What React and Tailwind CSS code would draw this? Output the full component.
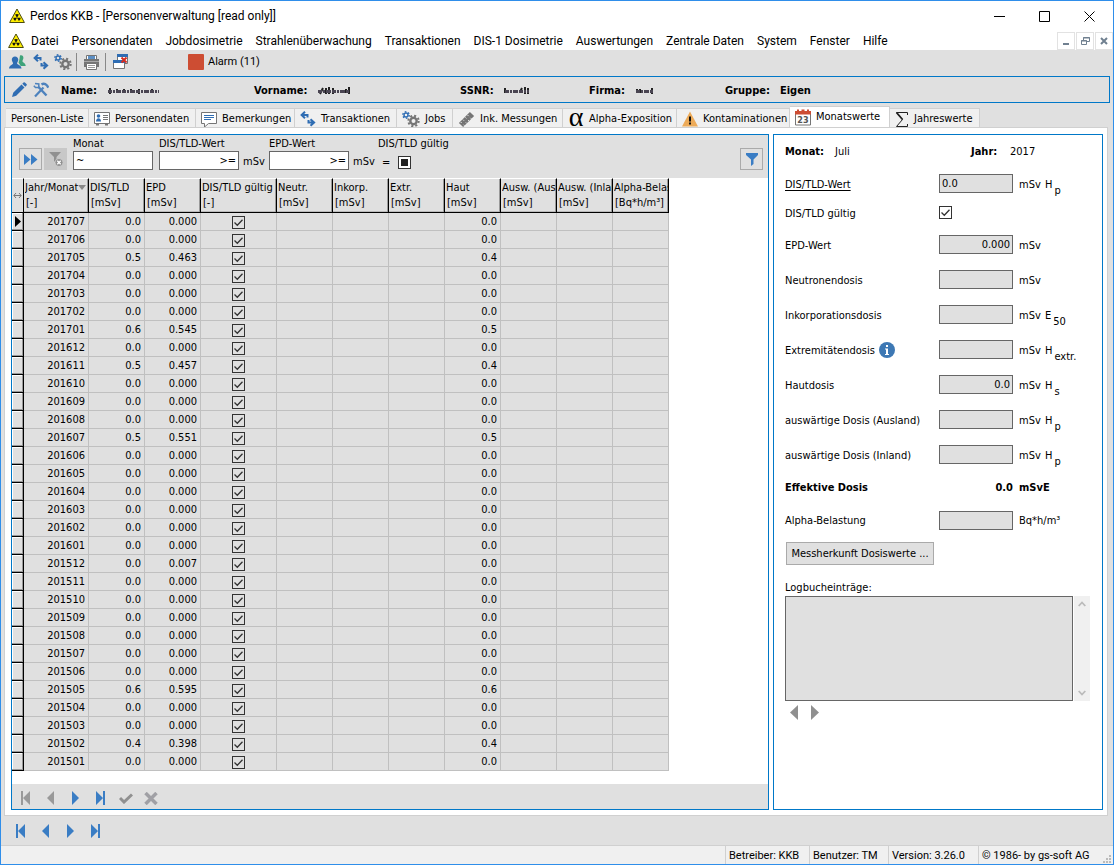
import React from 'react';

const MENU = ['Datei', 'Personendaten', 'Jobdosimetrie', 'Strahlenüberwachung', 'Transaktionen', 'DIS-1 Dosimetrie', 'Auswertungen', 'Zentrale Daten', 'System', 'Fenster', 'Hilfe'];

const COLUMNS = [
    { title: 'Jahr/Monat', unit: '[-]', width: 'w-[65px]', sorted: true },
    { title: 'DIS/TLD', unit: '[mSv]', width: 'w-[56px]' },
    { title: 'EPD', unit: '[mSv]', width: 'w-[56px]' },
    { title: 'DIS/TLD gültig', unit: '[-]', width: 'w-[76px]' },
    { title: 'Neutr.', unit: '[mSv]', width: 'w-[56px]' },
    { title: 'Inkorp.', unit: '[mSv]', width: 'w-[56px]' },
    { title: 'Extr.', unit: '[mSv]', width: 'w-[56px]' },
    { title: 'Haut', unit: '[mSv]', width: 'w-[56px]' },
    { title: 'Ausw. (Ausl', unit: '[mSv]', width: 'w-[56px]' },
    { title: 'Ausw. (Inlan', unit: '[mSv]', width: 'w-[56px]' },
    { title: 'Alpha-Belas', unit: '[Bq*h/m³]', width: 'w-[56px]' },
];

// month, DIS/TLD, EPD, skin dose
const ROWS = [
    ['201707', '0.0', '0.000', '0.0'],
    ['201706', '0.0', '0.000', '0.0'],
    ['201705', '0.5', '0.463', '0.4'],
    ['201704', '0.0', '0.000', '0.0'],
    ['201703', '0.0', '0.000', '0.0'],
    ['201702', '0.0', '0.000', '0.0'],
    ['201701', '0.6', '0.545', '0.5'],
    ['201612', '0.0', '0.000', '0.0'],
    ['201611', '0.5', '0.457', '0.4'],
    ['201610', '0.0', '0.000', '0.0'],
    ['201609', '0.0', '0.000', '0.0'],
    ['201608', '0.0', '0.000', '0.0'],
    ['201607', '0.5', '0.551', '0.5'],
    ['201606', '0.0', '0.000', '0.0'],
    ['201605', '0.0', '0.000', '0.0'],
    ['201604', '0.0', '0.000', '0.0'],
    ['201603', '0.0', '0.000', '0.0'],
    ['201602', '0.0', '0.000', '0.0'],
    ['201601', '0.0', '0.000', '0.0'],
    ['201512', '0.0', '0.007', '0.0'],
    ['201511', '0.0', '0.000', '0.0'],
    ['201510', '0.0', '0.000', '0.0'],
    ['201509', '0.0', '0.000', '0.0'],
    ['201508', '0.0', '0.000', '0.0'],
    ['201507', '0.0', '0.000', '0.0'],
    ['201506', '0.0', '0.000', '0.0'],
    ['201505', '0.6', '0.595', '0.6'],
    ['201504', '0.0', '0.000', '0.0'],
    ['201503', '0.0', '0.000', '0.0'],
    ['201502', '0.4', '0.398', '0.4'],
    ['201501', '0.0', '0.000', '0.0'],
];

const RadiationIcon = () => (
    <svg width="16" height="16" viewBox="0 0 16 16" aria-hidden="true">
        <path d="M8 1 15.4 14.5H.6Z" fill="#ffee00" stroke="#4a4a10" strokeWidth="1" strokeLinejoin="round" />
        <path d="M8 9.8 6.1 6.6a3.7 3.7 0 0 1 3.8 0ZM8 9.8H4.3a3.7 3.7 0 0 0 1.8 3.2ZM8 9.8h3.7a3.7 3.7 0 0 1-1.8 3.2Z" fill="#111" />
    </svg>
);

const PeopleIcon = () => (
    <svg width="17" height="16" viewBox="0 0 17 16" aria-hidden="true">
        <path d="M11 1.500c2-.8 3.600.6 3.400 2.600-.1 1.500-1 2.200-.9 3.300.1 1 3.200 1.500 3.200 4.600h-5L9.500 8.500c1-1.500 1-5 1.500-7Z" fill="#3fa37a" />
        <path d="M6 2.500c2 0 3.300 1.300 3.300 3.300 0 1.500-1.200 2.500-1.200 3.600 0 1.300 4.400 1.500 4.400 5.100H0c0-3.600 4-3.800 4-5.100 0-1.100-1.200-2.100-1.200-3.600C2.800 3.800 4 2.500 6 2.500Z" fill="#2f6db3" />
    </svg>
);

const SwapIcon = () => (
    <svg width="16" height="16" viewBox="0 0 16 16" fill="none" stroke="#2f6db3" strokeWidth="2" aria-hidden="true">
        <path d="M5 .7 1.600 4 5 7.300M2 4h5.500v2.500M10.500 8.200l3.600 3.300-3.600 3.300M14 11.500H8.500V9" />
    </svg>
);

const GearsIcon = () => (
    <svg width="18" height="16" viewBox="0 0 18 16" fill="none" aria-hidden="true">
        <circle cx="11.500" cy="10" r="3.200" stroke="#757575" strokeWidth="2.400" />
        <circle cx="11.500" cy="10" r="5.200" stroke="#757575" strokeWidth="2" strokeDasharray="2.040 2.044" />
        <circle cx="4" cy="4" r="2" stroke="#2f6db3" strokeWidth="1.400" />
        <circle cx="4" cy="4" r="3.200" stroke="#2f6db3" strokeWidth="1.400" strokeDasharray="1.676 1.675" />
    </svg>
);

const PrinterIcon = () => (
    <svg width="17" height="17" viewBox="0 0 17 17" aria-hidden="true">
        <path d="M3.500 5V1.500h10V5" fill="#fff" stroke="#757575" />
        <path d="M5 2h7v3H5Z" fill="#5d8fc4" />
        <path d="M1 5h15v8H1Z" fill="#757575" />
        <path d="M1 7h15v1H1Z" fill="#a8a8a8" />
        <path d="M3.500 9.500h10v6h-10Z" fill="#fff" stroke="#757575" />
        <path d="M5 11h7v1H5ZM5 13h7v1H5Z" fill="#9a9a9a" />
    </svg>
);

const CloseWindowsIcon = () => (
    <svg width="16" height="16" viewBox="0 0 16 16" aria-hidden="true">
        <path d="M4.500.500h10v9h-10Z" fill="#fff" stroke="#757575" />
        <path d="M4 0h11v3H4Z" fill="#2f6db3" />
        <path d="M.5 6.500h11v8H.5Z" fill="#fff" stroke="#757575" />
        <path d="M0 6h12v3H0Z" fill="#2f6db3" />
        <path d="m8.500 3.500 5 5M13.500 3.500l-5 5" stroke="#d62d20" strokeWidth="2" />
    </svg>
);

const PencilIcon = () => (
    <svg width="16" height="16" viewBox="0 0 16 16" aria-hidden="true">
        <path d="M1 15 2.200 10.800 10.500 2.500 13.500 5.500 5.200 13.800ZM11.300 1.700 12.500.5a1 1 0 0 1 1.400 0l1.600 1.600a1 1 0 0 1 0 1.400l-1.200 1.200Z" fill="#2f6db3" />
    </svg>
);

const ToolsIcon = () => (
    <svg width="16" height="16" viewBox="0 0 16 16" fill="none" aria-hidden="true">
        <path d="m5.500 5 8 8.500" stroke="#4d82bd" strokeWidth="2.400" />
        <path d="M2 1.500 5.800 2v3.500H2.500L.8 3.800" stroke="#4d82bd" strokeWidth="1.500" />
        <path d="m2 14.500 8.500-9" stroke="#4d82bd" strokeWidth="2.200" />
        <path d="M8.500 2.500c2-1.300 4-.6 5.500 1l1.300 2.200" stroke="#4d82bd" strokeWidth="2.400" />
    </svg>
);

const CardIcon = () => (
    <svg width="16" height="14" viewBox="0 0 16 14" aria-hidden="true">
        <path d="M.5.500h15v11H.5Z" fill="#fff" stroke="#757575" />
        <circle cx="4.500" cy="4" r="1.800" fill="#2f6db3" />
        <path d="M2 9.500c0-4.500 5-4.500 5 0Z" fill="#2f6db3" />
        <path d="M9 3.500h5M9 5.500h5M9 7.500h5" stroke="#757575" />
        <path d="M2 11.500h3v2H2ZM11 11.500h3v2h-3Z" fill="#757575" />
    </svg>
);

const CommentIcon = () => (
    <svg width="16" height="17" viewBox="0 0 16 17" fill="none" aria-hidden="true">
        <path d="M.5 1.500h15v11H7.500l-4 3.500v-3.500h-3Z" fill="#fff" stroke="#757575" />
        <path d="M3 4.500h10M3 6.500h10M3 8.500h7" stroke="#2f6db3" />
    </svg>
);

const BandageIcon = () => (
    <svg width="17" height="17" viewBox="0 0 17 17" aria-hidden="true">
        <path d="M3 14 14 3" stroke="#757575" strokeWidth="6" />
        <path d="m2.700 11 1 1M5 8.700l1 1M7.300 6.400l1 1M9.600 4.100l1 1M5.500 13.700l1 1M7.800 11.400l1 1M10.100 9.100l1 1M12.400 6.800l1 1" stroke="#eee" strokeWidth="1" />
    </svg>
);

const WarningIcon = () => (
    <svg width="16" height="16" viewBox="0 0 16 16" aria-hidden="true">
        <path d="M8 .5 16 15.500H0Z" fill="#edab59" />
        <path d="M7 5.500h2v5H7ZM7 11.500h2v2H7Z" fill="#111" />
    </svg>
);

const CalendarIcon = () => (
    <svg width="16" height="17" viewBox="0 0 16 17" aria-hidden="true">
        <path d="M.5 3.500h15v12.500H.5Z" fill="#fff" stroke="#757575" />
        <path d="M0 2h2V.5h2V2h2.500V.5h3V2H12V.5h2V2h2v3.500H0Z" fill="#cd4d33" />
        <text x="8" y="14" textAnchor="middle" fontSize="9" fontWeight="700" fill="#555">23</text>
    </svg>
);

const AlphaIcon = () => <span className="w-4 pb-1 text-center font-['Liberation_Serif',serif] text-[28px] leading-3">α</span>;
const SigmaIcon = () => (
    <svg width="14" height="17" viewBox="0 0 14 17" fill="none" stroke="#222" aria-hidden="true">
        <path d="M12.500 4V1.500h-11l6 7-6 7h11V13" />
        <path d="m1.500 1.500 6 7" strokeWidth="1.800" />
    </svg>
);

const TABS = [
    { label: 'Personen-Liste', width: 'w-[83px]' },
    { label: 'Personendaten', width: 'w-[107px]', icon: CardIcon },
    { label: 'Bemerkungen', width: 'w-[99px]', icon: CommentIcon },
    { label: 'Transaktionen', width: 'w-[102px]', icon: SwapIcon },
    { label: 'Jobs', width: 'w-[56px]', icon: GearsIcon },
    { label: 'Ink. Messungen', width: 'w-[110px]', icon: BandageIcon },
    { label: 'Alpha-Exposition', width: 'w-[114px]', icon: AlphaIcon },
    { label: 'Kontaminationen', width: 'w-[113px]', icon: WarningIcon },
    { label: 'Monatswerte', width: 'w-[100px]', icon: CalendarIcon, active: true },
    { label: 'Jahreswerte', width: 'w-[90px]', icon: SigmaIcon },
];

const NAV_PATHS = {
    first: 'M0 0h2v14H0ZM9 0v14L2 7Z',
    prev: 'M8 0v14L1 7Z',
    next: 'M1 0v14l7-7Z',
    last: 'M0 0v14l7-7ZM7 0h2v14H7Z',
};

const NavButton = ({ kind, label, color = 'text-[#3a7dc4]' }) => (
    <button aria-label={label} className={`grid h-4 w-[25px] place-items-center ${color}`}>
        <svg width="9" height="14" viewBox="0 0 9 14" fill="currentColor">
            <path d={NAV_PATHS[kind]} />
        </svg>
    </button>
);

const CheckBox = ({ label, id, defaultChecked = true }) => (
    <span className="inline-grid size-[13px] shrink-0 align-middle">
        <input
            id={id}
            type="checkbox"
            aria-label={label}
            defaultChecked={defaultChecked}
            className="peer col-start-1 row-start-1 size-[13px] appearance-none border border-[#333]"
        />
        <svg viewBox="0 0 13 13" fill="none" stroke="#333" strokeWidth="1.300" className="pointer-events-none invisible col-start-1 row-start-1 size-[13px] peer-checked:visible">
            <path d="m2.500 6.500 2.800 2.800 5.200-5.600" />
        </svg>
    </span>
);

// Personal data is masked with a smear
const Masked = ({ width, d }) => (
    <svg width={width} height="10" viewBox={`0 0 ${width} 10`} fill="none" className="blur-[0.5px]" aria-hidden="true">
        <path d={d} stroke="#222" strokeWidth="2" />
        <path d={`M1 5.500h${width - 3}`} stroke="#4a4552" strokeWidth="3" strokeDasharray="4 1 2 1 5 1" />
    </svg>
);

const HeadField = ({ label, width, children }) => (
    <div className={`flex items-center gap-2.5 pt-0.5 ${width}`}>
        <span className="font-bold">{label}</span>
        {children}
    </div>
);

const FilterInput = ({ label, value, unit, align = 'text-left' }) => (
    <div className="flex flex-col">
        <label htmlFor={`filter-${label}`} className="leading-[15px]">{label}</label>
        <div className="flex items-center gap-1">
            <input id={`filter-${label}`} defaultValue={value} className={`h-[19px] w-20 border border-[#666] bg-white px-0.5 ${align}`} />
            {unit && <span className="w-[22px] pt-0.5">{unit}</span>}
        </div>
    </div>
);

const DoseRow = ({ id, label, value = '', unit = 'mSv', symbol, sub, height = 'h-[35px]', underline = false, info = false, align = 'text-right' }) => (
    <div className={`flex items-center ${height}`}>
        <div className="flex w-[154px] items-center gap-1">
            <label htmlFor={id} className={`pt-0.5 ${underline ? 'underline underline-offset-2' : ''}`}>{label}</label>
            {info && (
                <svg width="16" height="16" viewBox="0 0 16 16" aria-label="Info">
                    <circle cx="8" cy="8" r="8" fill="#3d78b4" />
                    <path d="M7 3h2v2H7ZM6 6.500h3V12h1v1H6v-1h1V7.500H6Z" fill="#fff" />
                </svg>
            )}
        </div>
        <input id={id} readOnly value={value} className={`h-[19px] w-[74px] border border-[#666] bg-[#e0e0e0] px-0.5 ${align}`} />
        <span className="ml-1.5 w-[26px] pt-0.5">{unit}</span>
        {symbol && <span className="pt-0.5">{symbol}</span>}
        {sub && <sub className="static mt-3.5 ml-0.5 text-[11px] leading-4">{sub}</sub>}
    </div>
);

const DoseTable = () => (
    <table className="w-[657px] table-fixed border-separate border-spacing-0 bg-[#e0e0e0]">
        <thead>
            <tr className="h-[35px]">
                <th className="w-3 border-r border-b border-black border-t border-t-white text-[#777]">
                    <svg width="9" height="7" viewBox="0 0 9 7" fill="none" stroke="#777" className="mx-auto">
                        <path d="M1 3.500h7M3 1 .8 3.500 3 6M6 1l2.200 2.500L6 6" />
                    </svg>
                </th>
                {COLUMNS.map((c) => (
                    <th
                        key={c.title}
                        className={`${c.width} border-t border-r border-b border-black border-t-white pl-px text-left align-top font-normal leading-[15px] shadow-[inset_-1px_0_0_#999,inset_0_-1px_0_#bbb]`}
                    >
                        <div className="flex items-center overflow-hidden whitespace-nowrap pt-px">
                            <span className="overflow-hidden">{c.title}</span>
                            {c.sorted && <svg width="8" height="5" viewBox="0 0 8 5" className="shrink-0"><path d="M0 0h8L4 5Z" fill="#888" /></svg>}
                        </div>
                        <div className="pl-px">{c.unit}</div>
                    </th>
                ))}
            </tr>
        </thead>
        <tbody>
            {ROWS.map(([month, dis, epd, skin], i) => (
                <tr key={month} className="h-[18px] leading-4 [&>td]:border-r [&>td]:border-b [&>td]:border-[#c0c0c0] [&>td]:p-0 [&>td]:pt-px [&>td]:pr-[3px] [&>td]:text-right">
                    <th className="border-r border-b border-black p-0 shadow-[inset_-1px_-1px_0_#999,inset_1px_1px_0_#fff]">
                        {i === 0 && <svg width="6" height="11" viewBox="0 0 6 11" className="mx-auto"><path d="M0 0v11l6-5.500Z" /></svg>}
                    </th>
                    <td>{month}</td>
                    <td>{dis}</td>
                    <td>{epd}</td>
                    <td>
                        <div className="flex justify-center pl-[3px]"><CheckBox label={`DIS/TLD gültig ${month}`} /></div>
                    </td>
                    <td />
                    <td />
                    <td />
                    <td>{skin}</td>
                    <td />
                    <td />
                    <td />
                </tr>
            ))}
        </tbody>
    </table>
);

const MonthlyList = () => (
    <section className="flex min-w-0 flex-1 flex-col border border-[#0078c8] bg-white">
        <div className="flex h-[43px] items-start bg-[#e0e0e0] pt-px pr-[5px] pl-[7px]">
            <button aria-label="Filter ausführen" className="mt-3 grid h-[22px] w-[23px] place-items-center border border-[#aaa]">
                <svg width="14" height="11" viewBox="0 0 14 11" fill="#3a7dc4"><path d="M0 0v11l6.500-5.500ZM7 0v11l6.500-5.500Z" /></svg>
            </button>
            <button aria-label="Filter löschen" className="mt-3 mr-1.5 ml-0.5 grid h-[22px] w-[23px] place-items-center bg-[#c8c8c8]">
                <svg width="14" height="15" viewBox="0 0 14 15" fill="none">
                    <path d="M0 0h12L7.500 5v6L5 9V5Z" fill="#909090" />
                    <circle cx="10" cy="10.500" r="4" fill="#909090" stroke="#ddd" strokeWidth=".6" />
                    <path d="m8.300 8.800 3.400 3.400M11.700 8.800l-3.400 3.400" stroke="#fff" strokeWidth="1.300" />
                </svg>
            </button>
            <div className="flex gap-1.5">
                <FilterInput label="Monat" value="~" />
                <FilterInput label="DIS/TLD-Wert" value=">=" unit="mSv" align="text-right" />
            </div>
            <div className="ml-1">
                <FilterInput label="EPD-Wert" value=">=" unit="mSv" align="text-right" />
            </div>
            <div className="ml-[3px] flex flex-col">
                <label htmlFor="filter-valid" className="leading-[15px]">DIS/TLD gültig</label>
                <div className="flex h-[23px] items-center gap-2 pl-1">
                    <span>=</span>
                    <span className="inline-grid size-[13px] place-items-center">
                        <input id="filter-valid" type="checkbox" className="col-start-1 row-start-1 size-[13px] appearance-none border border-[#333] bg-white" />
                        <span className="pointer-events-none col-start-1 row-start-1 size-[7px] bg-[#222]" />
                    </span>
                </div>
            </div>
            <button aria-label="Filter" className="mt-3 ml-auto grid h-[22px] w-[23px] place-items-center border border-[#aaa]">
                <svg width="12" height="13" viewBox="0 0 12 13" fill="#3a7dc4"><path d="M0 0h12v2L7.500 6.500V11L5 13V6.500L0 2Z" /></svg>
            </button>
        </div>
        <div className="flex-1">
            <DoseTable />
        </div>
        <div className="flex h-[25px] items-center bg-[#e0e0e0] pt-[3px] pl-px">
            <NavButton kind="first" label="Erster" color="text-[#999]" />
            <NavButton kind="prev" label="Vorheriger" color="text-[#999]" />
            <NavButton kind="next" label="Nächster" />
            <NavButton kind="last" label="Letzter" />
            <button aria-label="Speichern" className="grid h-4 w-[25px] place-items-center">
                <svg width="14" height="11" viewBox="0 0 14 11" fill="none" stroke="#909090" strokeWidth="3"><path d="m1 5 4 4 8-7.500" /></svg>
            </button>
            <button aria-label="Abbrechen" className="grid h-4 w-[25px] place-items-center">
                <svg width="14" height="13" viewBox="0 0 14 13" fill="none" stroke="#a0a0a5" strokeWidth="3.500"><path d="m1.500 1 11 11M12.500 1l-11 11" /></svg>
            </button>
        </div>
    </section>
);

const MonthDetail = () => (
    <section className="w-[330px] shrink-0 border border-[#0078c8] bg-white pl-[11px]">
        <div className="flex h-[34px] items-center">
            <strong className="w-[50px]">Monat:</strong>
            <span className="w-[136px]">Juli</span>
            <strong className="w-[39px]">Jahr:</strong>
            <span>2017</span>
        </div>
        <DoseRow id="dis" label="DIS/TLD-Wert" value="0.0" symbol="H" sub="p" height="h-[29px]" underline align="text-left" />
        <div className="flex h-[29px] items-center">
            <label htmlFor="valid" className="w-[154px] pt-0.5">DIS/TLD gültig</label>
            <CheckBox id="valid" label="DIS/TLD gültig" />
        </div>
        <DoseRow id="epd" label="EPD-Wert" value="0.000" />
        <DoseRow id="neutr" label="Neutronendosis" />
        <DoseRow id="inkorp" label="Inkorporationsdosis" symbol="E" sub="50" />
        <DoseRow id="extr" label="Extremitätendosis" symbol="H" sub="extr." info />
        <DoseRow id="haut" label="Hautdosis" value="0.0" symbol="H" sub="s" />
        <DoseRow id="ausland" label="auswärtige Dosis (Ausland)" symbol="H" sub="p" />
        <DoseRow id="inland" label="auswärtige Dosis (Inland)" symbol="H" sub="p" />
        <div className="flex h-[30px] items-center pt-0.5 font-bold">
            <span className="w-[154px]">Effektive Dosis</span>
            <span className="w-[74px] text-right">0.0</span>
            <span className="ml-1.5">mSvE</span>
        </div>
        <DoseRow id="alpha" label="Alpha-Belastung" unit="Bq*h/m³" height="h-[36px]" />
        <button className="mt-1 ml-px h-[23px] w-[148px] border border-[#aaa] bg-[#e0e0e0]">Messherkunft Dosiswerte ...</button>
        <label htmlFor="log" className="mt-[15px] block leading-4">Logbucheinträge:</label>
        <div className="flex gap-px">
            <textarea id="log" readOnly className="h-[105px] w-[288px] resize-none border border-[#666] bg-[#e0e0e0]" />
            <div className="flex w-4 flex-col items-center justify-between bg-[#f0f0f0] py-[5px]">
                <svg width="8" height="6" viewBox="0 0 8 6" fill="none" stroke="#bbb" strokeWidth="1.800"><path d="m.7 5 3.300-3.500L7.300 5" /></svg>
                <svg width="8" height="6" viewBox="0 0 8 6" fill="none" stroke="#bbb" strokeWidth="1.800"><path d="M.7 1 4 4.500 7.300 1" /></svg>
            </div>
        </div>
        <div className="mt-1 flex gap-3 pl-1 text-[#909090]">
            <button aria-label="Vorheriger Eintrag"><svg width="9" height="15" viewBox="0 0 9 15" fill="currentColor"><path d="M9 0v15L1 7.500Z" /></svg></button>
            <button aria-label="Nächster Eintrag"><svg width="9" height="15" viewBox="0 0 9 15" fill="currentColor"><path d="M1 0v15l8-7.500Z" /></svg></button>
        </div>
    </section>
);

export default function App() {
    return (
        <div className="flex min-h-screen flex-col border border-[#2f8eea] bg-[#e0e0e0] font-['DejaVu_Sans_Condensed','DejaVu_Sans',sans-serif] text-[11px] leading-4 text-black">
            <header className="bg-white font-[Roboto,sans-serif] text-xs">
                <div className="flex h-[30px] items-center pl-2">
                    <RadiationIcon />
                    <h1 className="ml-[5px]">Perdos KKB - [Personenverwaltung [read only]]</h1>
                    <div className="ml-auto flex gap-[34px] pr-[18px]">
                        <button aria-label="Minimieren"><svg width="11" height="11" viewBox="0 0 11 11" stroke="#000"><path d="M0 5.500h11" /></svg></button>
                        <button aria-label="Maximieren"><svg width="11" height="11" viewBox="0 0 11 11" fill="none" stroke="#000"><path d="M.5.500h10v10H.5Z" /></svg></button>
                        <button aria-label="Schließen"><svg width="11" height="11" viewBox="0 0 11 11" fill="none" stroke="#000"><path d="m.5.500 10 10M10.500.500l-10 10" /></svg></button>
                    </div>
                </div>
                <nav className="flex h-[19px] items-center pl-[7px]">
                    <RadiationIcon />
                    <div className="ml-[7px] flex gap-[13px] whitespace-nowrap">
                        {MENU.map((m) => <button key={m}>{m}</button>)}
                    </div>
                    <div className="ml-auto flex gap-px">
                        <button aria-label="Fenster minimieren" className="grid h-[18px] w-[18px] place-items-center border border-[#e2e2e2]">
                            <svg width="8" height="8" viewBox="0 0 8 8" fill="#708090"><path d="M1 6h6v2H1Z" /></svg>
                        </button>
                        <button aria-label="Fenster wiederherstellen" className="grid h-[18px] w-[18px] place-items-center border border-[#e2e2e2]">
                            <svg width="9" height="8" viewBox="0 0 9 8" fill="none" stroke="#708090"><path d="M2.500 3V.5h6v4H6M2 1h7M.5 3.500h5v4h-5ZM0 4h6" /></svg>
                        </button>
                        <button aria-label="Fenster schließen" className="grid h-[18px] w-[18px] place-items-center border border-[#e2e2e2]">
                            <svg width="8" height="8" viewBox="0 0 8 8" stroke="#708090" strokeWidth="2"><path d="m1 1 6 6M7 1 1 7" /></svg>
                        </button>
                    </div>
                </nav>
            </header>

            <div className="flex h-[26px] items-center pb-0.5 pl-2">
                <button aria-label="Personen" className="w-[24px]"><PeopleIcon /></button>
                <button aria-label="Transaktionen" className="w-[21px]"><SwapIcon /></button>
                <button aria-label="Jobs" className="w-[22px]"><GearsIcon /></button>
                <span className="h-[18px] w-px bg-[#888]" />
                <button aria-label="Drucken" className="ml-1.5"><PrinterIcon /></button>
                <span className="ml-[5px] h-[18px] w-px bg-[#888]" />
                <button aria-label="Alle schließen" className="ml-[7px]"><CloseWindowsIcon /></button>
                <button className="ml-[59px] flex items-center gap-1">
                    <span className="size-4 rounded-[1px] bg-[#cd4d33]" />
                    <span className="font-[Roboto,sans-serif] text-[11px]">Alarm (11)</span>
                </button>
            </div>

            <div className="mx-[3px] flex h-[27px] items-center border border-[#0078c8] pl-1.5">
                <button aria-label="Bearbeiten" className="w-[22px]"><PencilIcon /></button>
                <button aria-label="Werkzeuge" className="w-[28px]"><ToolsIcon /></button>
                <HeadField label="Name:" width="w-[193px]">
                    <Masked width={54} d="M3 2v6M10 3v4M17 3v4M24 3v4M32 3v5M39 4v3M45 3v4" />
                </HeadField>
                <HeadField label="Vorname:" width="w-[206px]">
                    <Masked width={34} d="M3 8 6 2M9 2v6M12 1v7M16 2v6M29 3v4M32 1v7" />
                </HeadField>
                <HeadField label="SSNR:" width="w-[129px]">
                    <Masked width={27} d="M1 2v5M16 6l2-4M21 1v7M24 2v6" />
                </HeadField>
                <HeadField label="Firma:" width="w-[136px]">
                    <Masked width={20} d="M2 3v4M5 3v4M17 2v6" />
                </HeadField>
                <HeadField label="Gruppe:" width="w-auto">
                    <strong>Eigen</strong>
                </HeadField>
            </div>

            <div role="tablist" className="mt-[3px] flex items-end pl-[5px]">
                {TABS.map((t) => {
                    const Icon = t.icon;
                    return (
                        <button
                            key={t.label}
                            role="tab"
                            aria-selected={!!t.active}
                            className={`flex shrink-0 items-center gap-[5px] whitespace-nowrap border-t border-r border-[#d0d0d0] pl-[5px] ${t.width} ${t.active ? 'h-[21px] bg-white' : 'h-[19px] bg-[#f0f0f0] pt-0.5'}`}
                        >
                            {Icon && <Icon />}
                            {t.label}
                        </button>
                    );
                })}
            </div>

            <main className="mr-[5px] ml-[3px] flex flex-1 gap-1 border border-[#d0d0d0] bg-white pt-1.5 pr-1 pb-[5px] pl-1.5">
                <MonthlyList />
                <MonthDetail />
            </main>

            <div className="flex h-[29px] items-center pl-[7px]">
                <NavButton kind="first" label="Erste Person" />
                <NavButton kind="prev" label="Vorherige Person" />
                <NavButton kind="next" label="Nächste Person" />
                <NavButton kind="last" label="Letzte Person" />
            </div>

            <footer className="flex h-[19px] items-center justify-end border-t border-[#d0d0d0] bg-[#f0f0f0] font-[Roboto,sans-serif] text-[11px]">
                <span className="w-[84px] border-l border-[#d0d0d0] pt-0.5 pl-[3px]">Betreiber: KKB</span>
                <span className="w-[79px] border-l border-[#d0d0d0] pt-0.5 pl-[3px]">Benutzer: TM</span>
                <span className="w-[90px] border-l border-[#d0d0d0] pt-0.5 pl-[3px]">Version: 3.26.0</span>
                <span className="w-[125px] border-l border-[#d0d0d0] pt-0.5 pl-[3px]">© 1986- by gs-soft AG</span>
                <svg width="9" height="9" viewBox="0 0 9 9" fill="#bbb" className="mr-px self-end">
                    <path d="M6 0h2v2H6ZM3 3h2v2H3ZM6 3h2v2H6ZM0 6h2v2H0ZM3 6h2v2H3ZM6 6h2v2H6Z" />
                </svg>
            </footer>
        </div>
    );
}
